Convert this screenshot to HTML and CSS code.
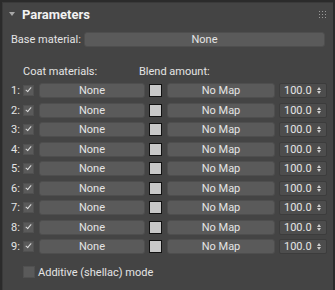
FILE: index.html
```html
<!DOCTYPE html>
<html lang="en">
<head>
    <meta charset="UTF-8">
    <title>Parameters</title>
    <link rel="stylesheet" href="styles.css">
</head>
<body>
    <div class="panel">
        <div class="panel-header">
            <span class="arrow"></span>
            <span class="title">Parameters</span>
            <span class="grip">
                <i></i><i></i><i></i><i></i><i></i><i></i><i></i><i></i><i></i>
            </span>
        </div>

        <div class="base-row">
            <span class="label">Base material:</span>
            <button class="btn base-btn">None</button>
        </div>

        <div class="col-heads">
            <span class="coat-head">Coat materials:</span>
            <span class="blend-head">Blend amount:</span>
        </div>

        <div class="rows">
            <div class="row"><span class="num">1:</span><span class="check on"></span><button class="btn mat">None</button><span class="swatch"></span><button class="btn map">No Map</button><span class="spin">100.0<span class="arrows"></span></span></div>
            <div class="row"><span class="num">2:</span><span class="check on"></span><button class="btn mat">None</button><span class="swatch"></span><button class="btn map">No Map</button><span class="spin">100.0<span class="arrows"></span></span></div>
            <div class="row"><span class="num">3:</span><span class="check on"></span><button class="btn mat">None</button><span class="swatch"></span><button class="btn map">No Map</button><span class="spin">100.0<span class="arrows"></span></span></div>
            <div class="row"><span class="num">4:</span><span class="check on"></span><button class="btn mat">None</button><span class="swatch"></span><button class="btn map">No Map</button><span class="spin">100.0<span class="arrows"></span></span></div>
            <div class="row"><span class="num">5:</span><span class="check on"></span><button class="btn mat">None</button><span class="swatch"></span><button class="btn map">No Map</button><span class="spin">100.0<span class="arrows"></span></span></div>
            <div class="row"><span class="num">6:</span><span class="check on"></span><button class="btn mat">None</button><span class="swatch"></span><button class="btn map">No Map</button><span class="spin">100.0<span class="arrows"></span></span></div>
            <div class="row"><span class="num">7:</span><span class="check on"></span><button class="btn mat">None</button><span class="swatch"></span><button class="btn map">No Map</button><span class="spin">100.0<span class="arrows"></span></span></div>
            <div class="row"><span class="num">8:</span><span class="check on"></span><button class="btn mat">None</button><span class="swatch"></span><button class="btn map">No Map</button><span class="spin">100.0<span class="arrows"></span></span></div>
            <div class="row"><span class="num">9:</span><span class="check on"></span><button class="btn mat">None</button><span class="swatch"></span><button class="btn map">No Map</button><span class="spin">100.0<span class="arrows"></span></span></div>
        </div>

        <div class="additive">
            <span class="check big"></span>
            <span>Additive (shellac) mode</span>
        </div>
    </div>
</body>
</html>
```

FILE: styles.css
```css
body {
    margin: 0;
    background-color: #2b2b2b;
    font-family: Roboto, "Liberation Sans", sans-serif;
    font-size: 11px;
    color: #e4e4e4;
    white-space: nowrap;
}

.panel {
    margin: 2px 2px 0 2px;
    height: 288px;
    background-color: #444444;
    border-left: 1px solid #3a3a3a;
    border-top: 1px solid #3a3a3a;
    box-sizing: border-box;
    overflow: hidden;
}

.panel-header {
    display: flex;
    align-items: center;
    height: 22px;
    padding-left: 6px;
}

.arrow {
    width: 0;
    height: 0;
    border-left: 3px solid transparent;
    border-right: 3px solid transparent;
    border-top: 4px solid #a8a8a8;
    margin-right: 7px;
}

.title {
    font-weight: bold;
    font-size: 13px;
    color: #f2f2f2;
}

.grip {
    margin-left: auto;
    margin-right: 7px;
    display: grid;
    grid-template-columns: repeat(3, 1px);
    gap: 2px;
}

.grip i {
    width: 1px;
    height: 1px;
    background-color: #9a9a9a;
}

.btn {
    flex-shrink: 0;
    font-family: inherit;
    font-size: 11px;
    color: #e4e4e4;
    background-color: #5a5a5a;
    border: 1px solid #4e4e4e;
    border-radius: 3px;
    height: 15px;
    padding: 0;
    line-height: 13px;
    text-align: center;
}

.base-row {
    display: flex;
    align-items: center;
    margin-top: 7px;
    padding-left: 8px;
}

.base-row .label {
    flex-shrink: 0;
    width: 73px;
}

.base-btn {
    width: 241px;
}

.col-heads {
    display: flex;
    margin-top: 16px;
    height: 16px;
    align-items: center;
}

.coat-head {
    flex-shrink: 0;
    padding-left: 20px;
    width: 116px;
}

.rows {
    margin-top: 2px;
}

.row {
    display: flex;
    align-items: center;
    height: 19.5px;
    padding-left: 8px;
}

.row > * {
    flex-shrink: 0;
}

.num {
    width: 12px;
}

.check {
    flex-shrink: 0;
    width: 9px;
    height: 9px;
    background-color: #5a5a5a;
    border: 1px solid #505050;
    position: relative;
}

.check.on::after {
    content: "";
    position: absolute;
    left: 3px;
    top: 0px;
    width: 2px;
    height: 5px;
    border-right: 1.5px solid #dadada;
    border-bottom: 1.5px solid #dadada;
    transform: rotate(40deg);
}

.mat {
    width: 106px;
    margin-left: 5px;
}

.swatch {
    width: 11px;
    height: 11px;
    margin-left: 4px;
    background-color: #c8c8c8;
    border: 1px solid #111111;
}

.map {
    width: 108px;
    margin-left: 5px;
}

.spin {
    display: flex;
    align-items: center;
    width: 48px;
    height: 15px;
    margin-left: 4px;
    box-sizing: border-box;
    padding-left: 4px;
    background-color: #4d4d4d;
    border: 1px solid #3c3c3c;
    border-radius: 2px;
    position: relative;
}

.arrows {
    position: absolute;
    right: 5px;
    top: 3px;
    width: 0;
    height: 0;
    border-left: 2px solid transparent;
    border-right: 2px solid transparent;
    border-bottom: 3px solid #cfcfcf;
}

.arrows::after {
    content: "";
    position: absolute;
    left: -2px;
    top: 4px;
    border-left: 2px solid transparent;
    border-right: 2px solid transparent;
    border-top: 3px solid #cfcfcf;
}

.additive {
    display: flex;
    align-items: center;
    gap: 3px;
    margin-top: 9px;
    padding-left: 20px;
}

.check.big {
    width: 10px;
    height: 10px;
}
```
